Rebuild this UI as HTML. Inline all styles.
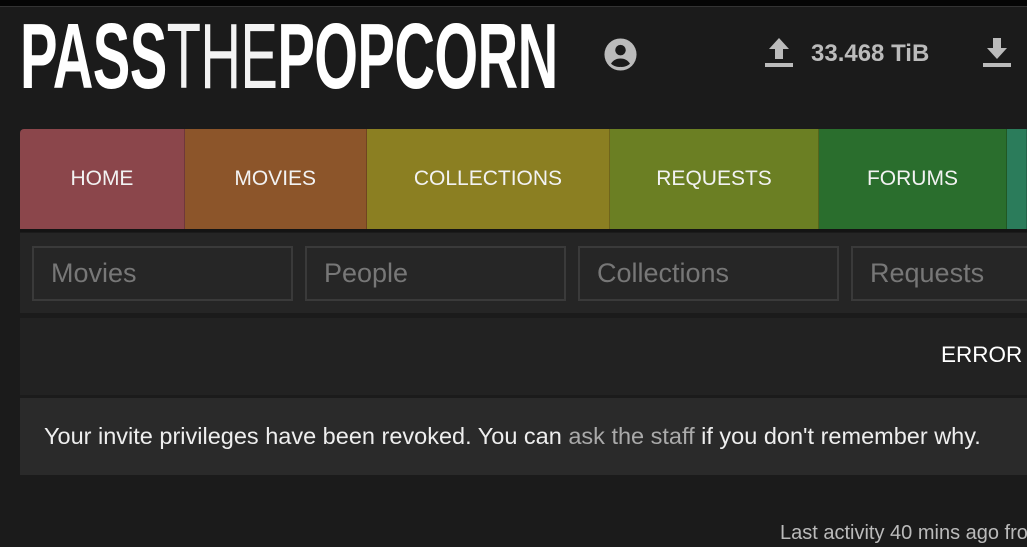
<!DOCTYPE html>
<html><head><meta charset="utf-8"><style>
*{margin:0;padding:0;box-sizing:border-box}
body{width:1027px;height:547px;overflow:hidden;background:#1b1b1b;font-family:"Liberation Sans",sans-serif;position:relative;color:#eee}
.top{position:absolute;left:0;top:0;width:1027px;height:7px;background:#050505;border-bottom:1px solid #333}
.logo{position:absolute;left:20px;top:13px;height:86px;white-space:nowrap;font-size:93px;line-height:86px;color:#fff;transform-origin:0 0;transform:scaleX(0.605);letter-spacing:-1px}
.logo b{font-weight:700}
.logo span{font-weight:400;opacity:.95}
.abs{position:absolute}
.nav{position:absolute;top:129px;left:20px;height:103px;width:1007px;display:flex;border-radius:4px 0 0 0;overflow:hidden;border-bottom:3px solid #141414}
.nav div{height:100%;display:flex;align-items:center;justify-content:center;font-size:21px;color:#f2f2f2;border-right:1px solid rgba(0,0,0,.2)}
.sbar{position:absolute;left:20px;top:233px;width:1007px;height:80px;background:#252525}
.inp{position:absolute;top:13px;height:55px;border:2px solid #3a3a3a;background:#262626;color:#777;font-size:27px;padding-left:17px;line-height:51px}
.err{position:absolute;left:20px;top:318px;width:1007px;height:77px;background:#222}
.msg{position:absolute;left:20px;top:398px;width:1007px;height:77px;background:#2a2a2a;font-size:23.5px;color:#eee;padding-left:24px;line-height:77px;white-space:nowrap}
</style></head><body>
<div class="top"></div>
<div class="logo"><b>PASS</b><span>THE</span><b>POPCORN</b></div>
<svg class="abs" style="left:603px;top:37px" width="35" height="35" viewBox="0 0 24 24"><circle cx="12" cy="12" r="11" fill="#bbb"/><circle cx="12" cy="9" r="3.6" fill="#1b1b1b"/><path d="M5.5 18.3c1.5-2.6 4-3.6 6.5-3.6s5 1 6.5 3.6A8.5 8.5 0 0 1 12 20.5a8.5 8.5 0 0 1-6.5-2.2z" fill="#1b1b1b"/></svg>
<svg class="abs" style="left:765px;top:38px" width="28" height="30" viewBox="0 0 28 30"><path d="M14 0L4 11h6v10h8V11h6z" fill="#bbb"/><rect x="0" y="25" width="28" height="4" fill="#bbb"/></svg>
<div class="abs" style="left:811px;top:40px;font-size:24px;font-weight:700;color:#bbb">33.468 TiB</div>
<svg class="abs" style="left:983px;top:38px" width="28" height="30" viewBox="0 0 28 30"><path d="M10 0h8v10h6L14 21 4 10h6z" fill="#bbb"/><rect x="0" y="25" width="28" height="4" fill="#bbb"/></svg>
<div class="nav">
<div style="width:167px;background:#8b464b">HOME</div>
<div style="width:184px;background:#8c552a">MOVIES</div>
<div style="width:247px;background:#8b7f22">COLLECTIONS</div>
<div style="width:211px;background:#6b7f23">REQUESTS</div>
<div style="width:191px;background:#2a6e2d">FORUMS</div>
<div style="width:20px;background:#2b7c5b"></div>
</div>
<div class="sbar">
<div class="inp" style="left:12px;width:261px">Movies</div>
<div class="inp" style="left:285px;width:261px">People</div>
<div class="inp" style="left:558px;width:261px">Collections</div>
<div class="inp" style="left:831px;width:200px">Requests</div>
</div>
<div class="err"><div class="abs" style="left:921px;top:24px;font-size:22.5px;color:#fff">ERROR</div></div>
<div class="msg">Your invite privileges have been revoked. You can <span style="color:#aaa">ask the staff</span> if you don't remember why.</div>
<div class="abs" style="left:780px;top:522px;font-size:20px;color:#bbb;white-space:nowrap">Last activity 40 mins ago from</div>
</body></html>
